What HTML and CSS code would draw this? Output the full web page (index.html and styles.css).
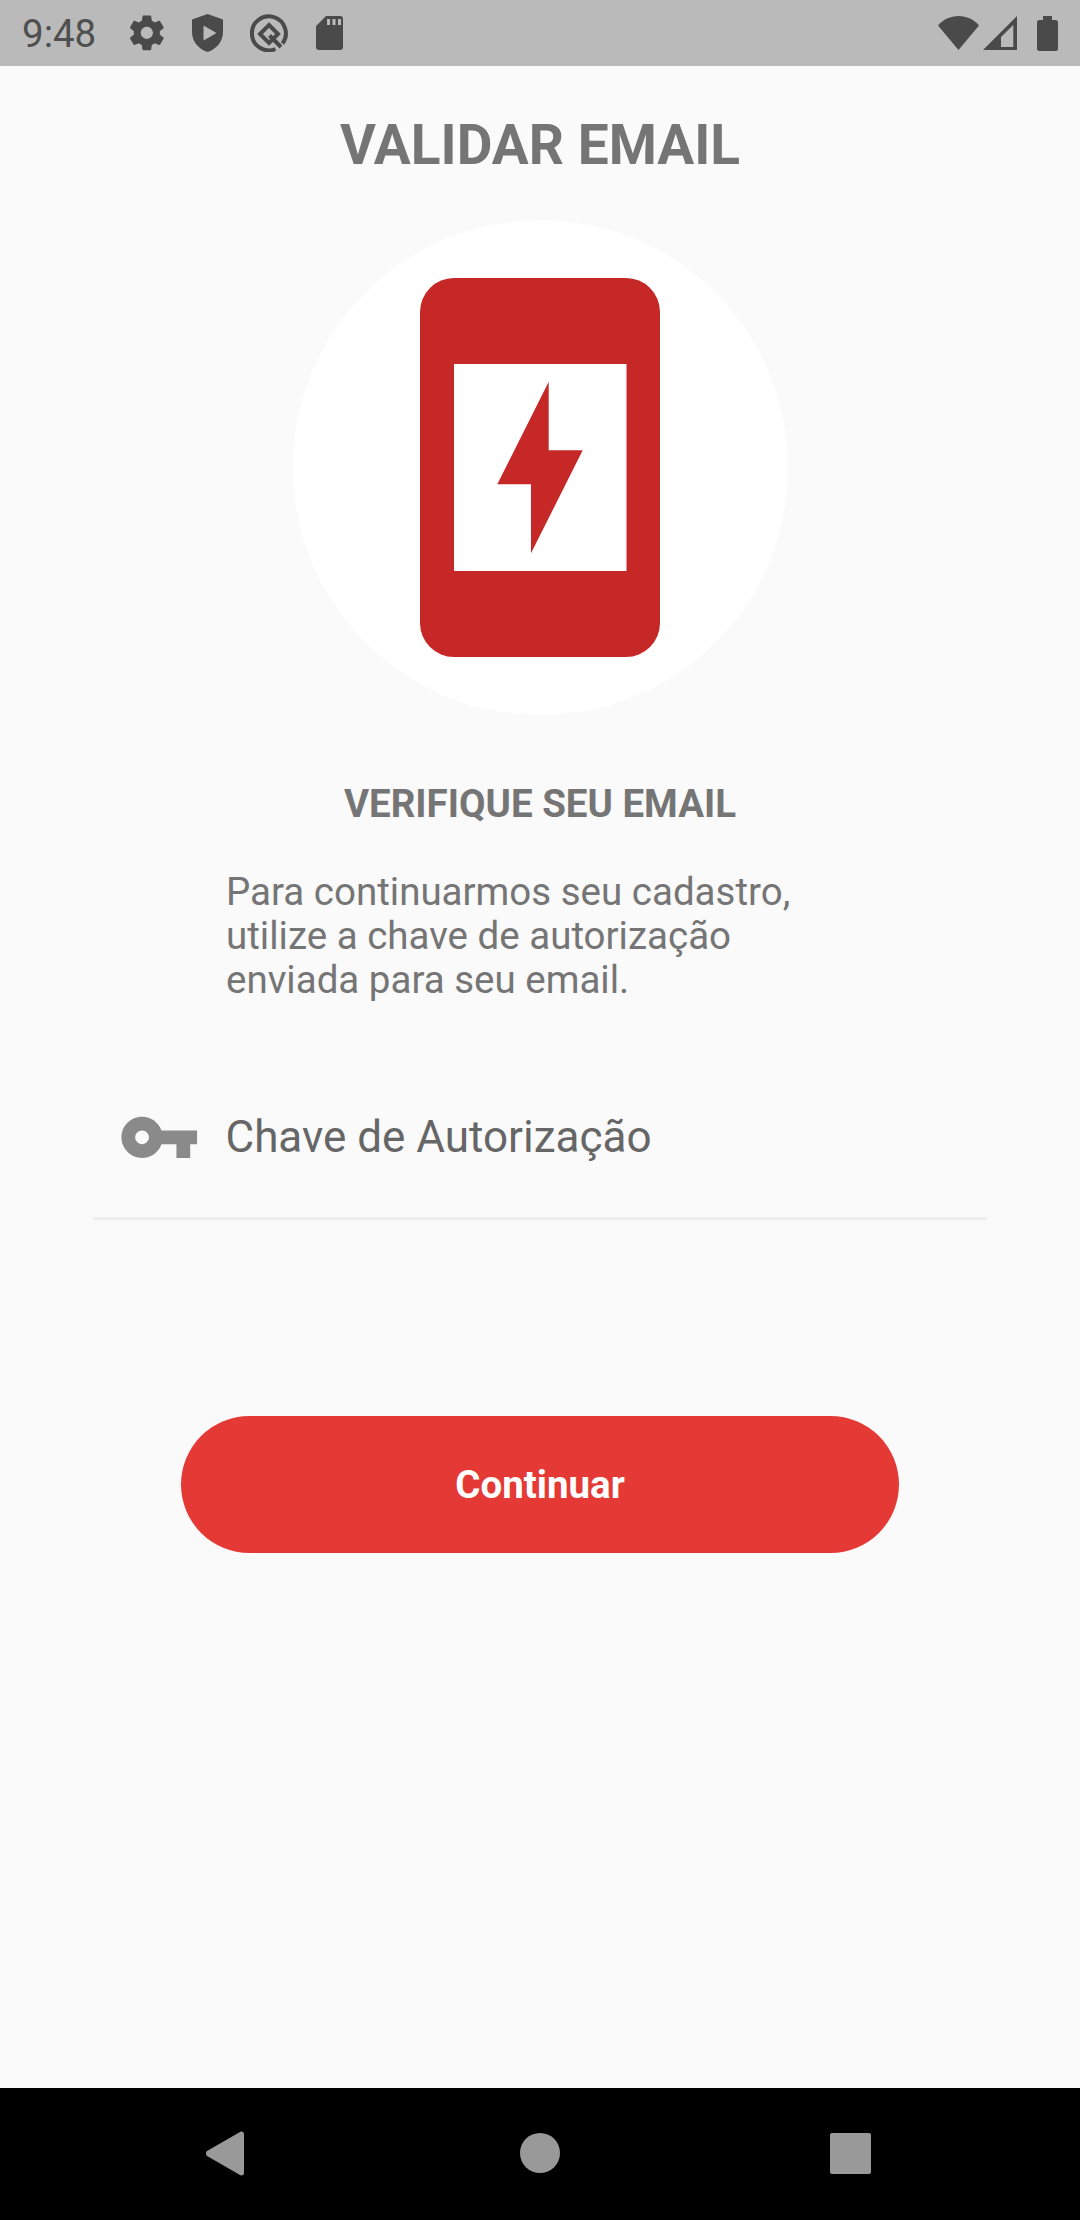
FILE: index.html
```html
<!DOCTYPE html>
<html lang="pt">
<head>
<meta charset="utf-8">
<title>Validar Email</title>
<link rel="stylesheet" href="styles.css">
</head>
<body>
<div class="app">
  <header class="status">
    <span class="time">9:48</span>
    <svg class="si gear" viewBox="0 0 24 24"><path d="M19.43 12.98c.04-.32.07-.64.07-.98s-.03-.66-.07-.98l2.11-1.65c.19-.15.24-.42.12-.64l-2-3.46c-.12-.22-.39-.3-.61-.22l-2.49 1c-.52-.4-1.08-.73-1.69-.98l-.38-2.65C14.46 2.18 14.25 2 14 2h-4c-.25 0-.46.18-.49.42l-.38 2.65c-.61.25-1.17.59-1.69.98l-2.49-1c-.23-.09-.49 0-.61.22l-2 3.46c-.13.22-.07.49.12.64l2.11 1.65c-.04.32-.07.65-.07.98s.03.66.07.98l-2.11 1.65c-.19.15-.24.42-.12.64l2 3.46c.12.22.39.3.61.22l2.49-1c.52.4 1.08.73 1.69.98l.38 2.65c.03.24.24.42.49.42h4c.25 0 .46-.18.49-.42l.38-2.65c.61-.25 1.17-.59 1.69-.98l2.49 1c.23.09.49 0 .61-.22l2-3.46c.12-.22.07-.49-.12-.64l-2.11-1.65zM12 15.5c-1.93 0-3.5-1.57-3.5-3.5s1.57-3.5 3.5-3.5 3.5 1.57 3.5 3.5-1.57 3.5-3.5 3.5z"/></svg>
    <svg class="si shield" viewBox="0 0 31 38"><path fill-rule="evenodd" d="M15.500 0 31 5.500V18c0 9.500-6.500 17-15.500 20C6.500 35 0 27.500 0 18V5.500zM11.500 11.500v15L24.500 19z"/></svg>
    <svg class="si q" viewBox="0 0 38 38"><path class="q-line" d="M25.500 35A17 17 0 1 1 32.500 29.500"/><path class="q-line" d="M19 11 28 20 19 29 10 20zM19.500 21.500 31 33"/></svg>
    <svg class="si sd" viewBox="0 0 27 34"><path fill-rule="evenodd" d="M10 0h14a3 3 0 0 1 3 3v28a3 3 0 0 1-3 3H3a3 3 0 0 1-3-3V10zM11 3v6h3V3zM16.500 3v6h3V3zM22 3v6h3V3z"/></svg>
    <span class="status-gap"></span>
    <svg class="si wifi" viewBox="0 0 41 34"><path d="M0 9.500C5 3.500 12.500 0 20.500 0S36 3.500 41 9.500L20.500 34z"/></svg>
    <svg class="si signal" viewBox="0 0 34 34"><path fill-rule="evenodd" d="M34 0v34H0zM30.300 9 18 21v10h12.300z"/></svg>
    <svg class="si battery" viewBox="0 0 21 35"><path d="M6 0h9v4h3.500a2.500 2.500 0 0 1 2.500 2.500V32.500a2.500 2.500 0 0 1-2.500 2.500h-16A2.500 2.500 0 0 1 0 32.500V6.500A2.500 2.500 0 0 1 2.500 4H6z"/></svg>
  </header>

  <main class="content">
    <h1 class="title">VALIDAR EMAIL</h1>
    <div class="hero">
      <svg class="hero-phone" viewBox="0 0 240 379">
        <path fill-rule="evenodd" d="M34 0h172a34 34 0 0 1 34 34v311a34 34 0 0 1-34 34H34a34 34 0 0 1-34-34V34A34 34 0 0 1 34 0zM34 86v207h172.500V86z"/>
        <path d="M128.700 103.700v68.600h34L111 275.300v-69H77.300z"/>
      </svg>
    </div>
    <h2 class="subtitle">VERIFIQUE SEU EMAIL</h2>
    <p class="intro">Para continuarmos seu cadastro,<br>utilize a chave de autorização<br>enviada para seu email.</p>
    <div class="field">
      <svg class="key" viewBox="0 0 24 24"><path d="M12.650 10C11.830 7.670 9.610 6 7 6c-3.310 0-6 2.690-6 6s2.690 6 6 6c2.610 0 4.830-1.670 5.650-4H17v4h4v-4h2v-4H12.650zM7 14c-1.100 0-2-.9-2-2s.9-2 2-2 2 .9 2 2-.9 2-2 2z"/></svg>
      <span class="field-label">Chave de Autorização</span>
    </div>
    <button class="cta">Continuar</button>
  </main>

  <nav class="navbar">
    <svg class="back" viewBox="0 0 39 45"><path d="M1 25 34 44c2 1 4 0 4-2V3c0-2-2-3-4-2L1 20c-1.300 1-1.300 4 0 5z"/></svg>
    <span class="home"></span>
    <span class="recent"></span>
  </nav>
</div>
</body>
</html>
```

FILE: styles.css
```css
* { box-sizing: border-box; }
html, body { margin: 0; padding: 0; }
body { width: 1080px; height: 2220px; font-family: Roboto, sans-serif; background: #fafafa; overflow: hidden; }
.app { display: flex; flex-direction: column; width: 1080px; height: 2220px; }

.status { flex: none; height: 66px; display: flex; align-items: center; padding: 0 22px; background: #bababa; }
.time { font-size: 38.500px; color: #4f4f4f; font-weight: 400; width: 104px; }
.si { display: block; fill: #4a4a4a; flex: none; }
.gear { width: 41.700px; height: 41.700px; }
.shield { width: 31px; height: 38px; margin-left: 24.600px; }
.q { width: 38px; height: 38px; margin-left: 27px; }
.q-line { fill: none; stroke: #4a4a4a; stroke-width: 4; }
.sd { width: 27px; height: 34px; margin-left: 28px; }
.status-gap { flex: 1; }
.wifi { width: 41px; height: 34px; }
.signal { width: 34px; height: 34px; margin-left: 4px; }
.battery { width: 21px; height: 35px; margin-left: 20px; }

.content { flex: 1; display: flex; flex-direction: column; align-items: center; background: #fafafa; }
.title { margin: 47px 0 0; font-size: 55px; line-height: 64px; font-weight: 700; color: #757575; }
.hero { margin-top: 43px; width: 495px; height: 495px; border-radius: 50%; background: #fff; display: flex; align-items: center; justify-content: center; }
.hero-phone { display: block; width: 240px; height: 379px; fill: #c62828; }
.subtitle { margin: 66px 0 0; font-size: 38.500px; line-height: 45px; font-weight: 700; color: #757575; }
.intro { align-self: flex-start; margin: 44px 0 0 226px; font-size: 38.500px; line-height: 44px; color: #757575; }
.field { align-self: center; width: 894px; height: 134px; margin-top: 84px; display: flex; align-items: flex-start; border-bottom: 3px solid #eeeeee; padding: 10px 0 0 25px; }
.key { display: block; width: 82.500px; height: 82.500px; fill: #8a8a8a; flex: none; }
.field-label { margin-left: 25px; font-size: 44px; line-height: 82px; color: #666666; }
.cta { margin-top: 196px; width: 718px; height: 137px; border: 0; border-radius: 69px; background: #e53935; color: #fff; font: 700 38.500px Roboto, sans-serif; }

.navbar { flex: none; height: 132px; background: #000; display: flex; align-items: center; padding: 0 0 2px 206px; }
.back { display: block; width: 39px; height: 45px; fill: #999999; }
.home { width: 40px; height: 40px; margin-left: 275px; border-radius: 50%; background: #999999; }
.recent { width: 41px; height: 41px; margin-left: 270px; border-radius: 2px; background: #999999; }
```
